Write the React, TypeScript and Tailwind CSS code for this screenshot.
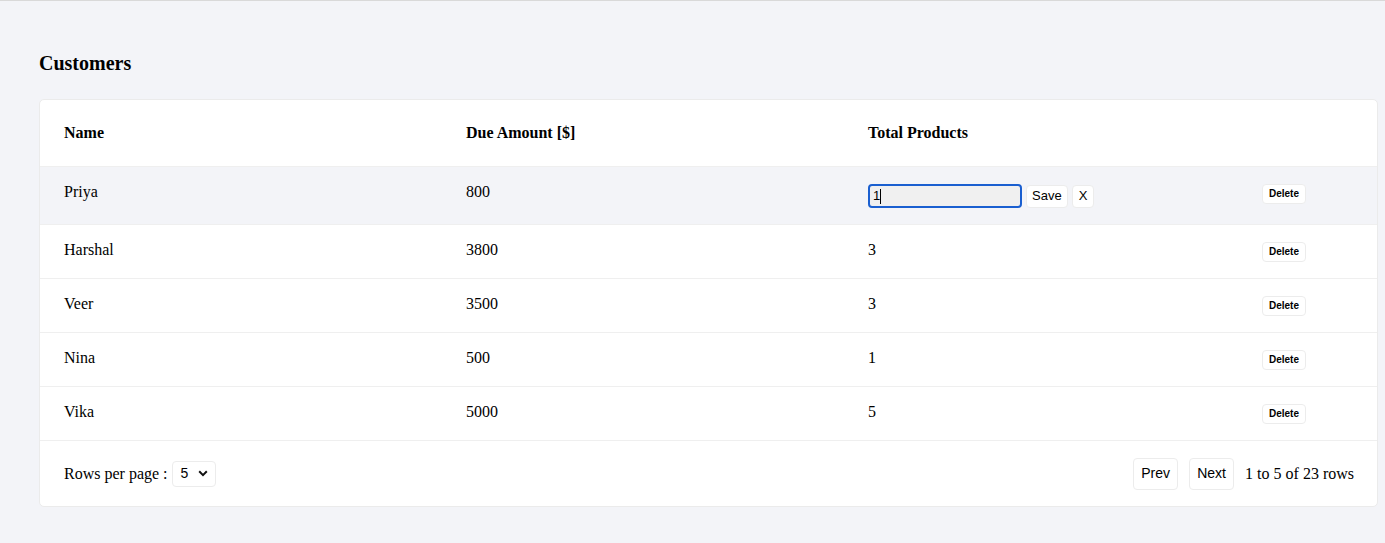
const rows = [
  { name: "Priya", due: 800, total: 1, editing: true },
  { name: "Harshal", due: 3800, total: 3 },
  { name: "Veer", due: 3500, total: 3 },
  { name: "Nina", due: 500, total: 1 },
  { name: "Vika", due: 5000, total: 5 },
];

const btn =
  "bg-white border border-[#ececec] rounded-[4px] font-['Liberation_Sans',Arial,sans-serif] text-black";

const App = () => {
  return (
    <div className="min-h-screen bg-[#f3f4f8] border-t border-[#d9d9d9] pl-[39px] pr-[7px] pt-[50px] font-['Liberation_Serif','Times_New_Roman',serif] text-black">
      <h2 className="text-[20px] leading-[24px] font-bold mb-[24px]">Customers</h2>

      <div className="bg-white border border-[#ebebeb] rounded-[5px] overflow-hidden">
        <div className="flex h-[67px] items-center border-b border-[#efefef] text-[16px] font-bold">
          <div className="w-[402px] pl-[24px]">Name</div>
          <div className="w-[402px] pl-[24px]">Due Amount [$]</div>
          <div className="w-[394px] pl-[24px]">Total Products</div>
          <div className="flex-1" />
        </div>

        {rows.map((r) => (
          <div
            key={r.name}
            className={
              r.editing
                ? "flex h-[58px] items-start border-b border-[#efefef] bg-[#f3f4f8] text-[16px]"
                : "flex h-[54px] items-start border-b border-[#efefef] text-[16px]"
            }
          >
            <div className="w-[402px] pl-[24px] pt-[16px] leading-[18px]">{r.name}</div>
            <div className="w-[402px] pl-[24px] pt-[16px] leading-[18px]">{r.due}</div>
            {r.editing ? (
              <div className="w-[394px] pl-[24px] pt-[17px] flex items-center gap-[4px]">
                <div className="w-[154px] h-[24px] rounded-[4px] border-2 border-[#1a5fd0] bg-[#f0f0f0] flex items-center pl-[3px] font-['Liberation_Sans',Arial,sans-serif] text-[13px]">
                  <span>1</span>
                  <span className="w-px h-[15px] bg-black" />
                </div>
                <button className={`${btn} h-[23px] px-[5px] text-[13px]`}>Save</button>
                <button className={`${btn} h-[23px] px-[6px] text-[13px]`}>X</button>
              </div>
            ) : (
              <div className="w-[394px] pl-[24px] pt-[16px] leading-[18px]">{r.total}</div>
            )}
            <div className="flex-1 flex pl-[24px] pt-[17px]">
              <button className={`${btn} h-[20px] px-[6px] text-[10px] font-bold leading-none`}>Delete</button>
            </div>
          </div>
        ))}

        <div className="flex h-[65px] items-center justify-between pl-[24px] pr-[23px] text-[16px]">
          <div className="flex items-center gap-[4px]">
            <span>Rows per page :</span>
            <div className={`${btn} w-[44px] h-[26px] flex items-center justify-between pl-[8px] pr-[7px] text-[14px]`}>
              <span>5</span>
              <svg width="10" height="7" viewBox="0 0 10 7" fill="none">
                <path d="M1.2 1.3L5 5.1L8.8 1.3" stroke="#111" strokeWidth="2" />
              </svg>
            </div>
          </div>
          <div className="flex items-center">
            <button className={`${btn} h-[32px] w-[45px] text-[14px]`}>Prev</button>
            <button className={`${btn} h-[32px] w-[45px] text-[14px] ml-[11px]`}>Next</button>
            <span className="ml-[11px]">1 to 5 of 23 rows</span>
          </div>
        </div>
      </div>
    </div>
  );
};

export default App;
